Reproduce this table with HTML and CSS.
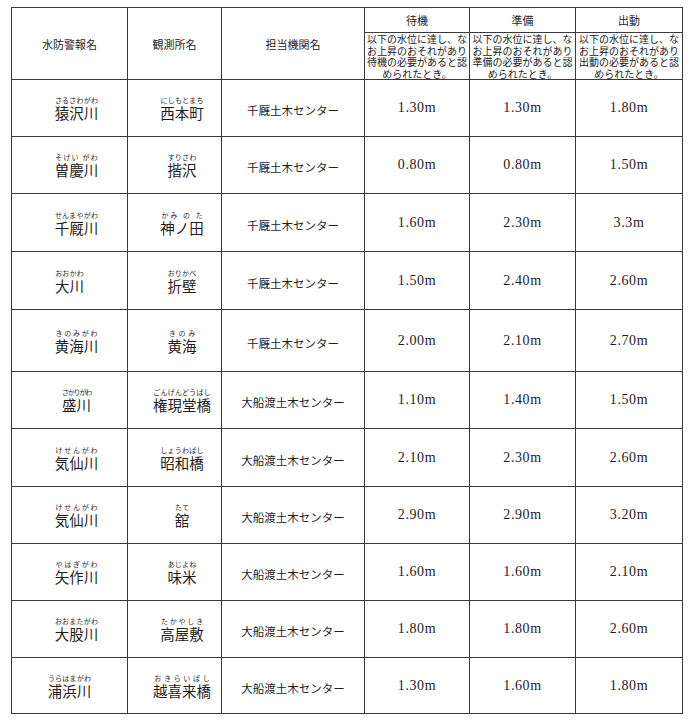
FILE: index.html
```html
<!DOCTYPE html>
<html lang="ja">
<head>
<meta charset="utf-8">
<title>水防警報</title>
<link rel="stylesheet" href="styles.css">
</head>
<body>
<table class="warn">
  <colgroup>
    <col class="c-river"><col class="c-station"><col class="c-office"><col class="c-lv"><col class="c-lv2"><col class="c-lv3">
  </colgroup>
  <thead>
    <tr class="h-top">
      <th rowspan="2">水防警報名</th>
      <th rowspan="2">観測所名</th>
      <th rowspan="2">担当機関名</th>
      <th>待機</th>
      <th>準備</th>
      <th>出動</th>
    </tr>
    <tr class="h-sub">
      <td class="cond">以下の水位に達し、な<br>お上昇のおそれがあり<br>待機の必要があると認<br>められたとき。</td>
      <td class="cond">以下の水位に達し、な<br>お上昇のおそれがあり<br>準備の必要があると認<br>められたとき。</td>
      <td class="cond">以下の水位に達し、な<br>お上昇のおそれがあり<br>出動の必要があると認<br>められたとき。</td>
    </tr>
  </thead>
  <tbody>
    <tr class="r57">
      <td class="river"><ruby>猿沢川<rt>さるさわがわ</rt></ruby></td>
      <td class="station"><ruby>西本町<rt>にしもとまち</rt></ruby></td>
      <td class="office">千厩土木センター</td>
      <td class="num">1.30m</td><td class="num">1.30m</td><td class="num">1.80m</td>
    </tr>
    <tr class="r57">
      <td class="river"><ruby>曽慶川<rt>そげい がわ</rt></ruby></td>
      <td class="station"><ruby>揩沢<rt>すりさわ</rt></ruby></td>
      <td class="office">千厩土木センター</td>
      <td class="num">0.80m</td><td class="num">0.80m</td><td class="num">1.50m</td>
    </tr>
    <tr class="r58">
      <td class="river"><ruby>千厩川<rt>せんまやがわ</rt></ruby></td>
      <td class="station"><ruby>神ノ田<rt>かみ の た</rt></ruby></td>
      <td class="office">千厩土木センター</td>
      <td class="num">1.60m</td><td class="num">2.30m</td><td class="num">3.3m</td>
    </tr>
    <tr class="r58">
      <td class="river shift"><ruby>大川<rt>おおかわ</rt></ruby></td>
      <td class="station"><ruby>折壁<rt>おりかべ</rt></ruby></td>
      <td class="office">千厩土木センター</td>
      <td class="num">1.50m</td><td class="num">2.40m</td><td class="num">2.60m</td>
    </tr>
    <tr class="r62">
      <td class="river"><ruby>黄海川<rt>きのみがわ</rt></ruby></td>
      <td class="station"><ruby>黄海<rt>きのみ</rt></ruby></td>
      <td class="office">千厩土木センター</td>
      <td class="num">2.00m</td><td class="num">2.10m</td><td class="num">2.70m</td>
    </tr>
    <tr class="r57">
      <td class="river"><ruby>盛川<rt class="tight">さかりがわ</rt></ruby></td>
      <td class="station"><ruby>権現堂橋<rt>ごんげんどうばし</rt></ruby></td>
      <td class="office">大船渡土木センター</td>
      <td class="num">1.10m</td><td class="num">1.40m</td><td class="num">1.50m</td>
    </tr>
    <tr class="r58">
      <td class="river"><ruby>気仙川<rt>けせんがわ</rt></ruby></td>
      <td class="station"><ruby>昭和橋<rt>しょうわばし</rt></ruby></td>
      <td class="office">大船渡土木センター</td>
      <td class="num">2.10m</td><td class="num">2.30m</td><td class="num">2.60m</td>
    </tr>
    <tr class="r57">
      <td class="river"><ruby>気仙川<rt>けせんがわ</rt></ruby></td>
      <td class="station"><ruby>舘<rt>たて</rt></ruby></td>
      <td class="office">大船渡土木センター</td>
      <td class="num">2.90m</td><td class="num">2.90m</td><td class="num">3.20m</td>
    </tr>
    <tr class="r57">
      <td class="river"><ruby>矢作川<rt>やはぎがわ</rt></ruby></td>
      <td class="station"><ruby>味米<rt>あじよね</rt></ruby></td>
      <td class="office">大船渡土木センター</td>
      <td class="num">1.60m</td><td class="num">1.60m</td><td class="num">2.10m</td>
    </tr>
    <tr class="r57">
      <td class="river"><ruby>大股川<rt>おおまたがわ</rt></ruby></td>
      <td class="station"><ruby>高屋敷<rt>たかやしき</rt></ruby></td>
      <td class="office">大船渡土木センター</td>
      <td class="num">1.80m</td><td class="num">1.80m</td><td class="num">2.60m</td>
    </tr>
    <tr class="r56">
      <td class="river shift"><ruby>浦浜川<rt>うらはまがわ</rt></ruby></td>
      <td class="station"><ruby>越喜来橋<rt>おきらいばし</rt></ruby></td>
      <td class="office">大船渡土木センター</td>
      <td class="num">1.30m</td><td class="num">1.60m</td><td class="num">1.80m</td>
    </tr>
  </tbody>
</table>
</body>
</html>
```
FILE: styles.css
```css
html, body {
  margin: 0;
  padding: 0;
  background: #ffffff;
}
body {
  padding: 7px 0 0 11px;
  font-family: "Noto Sans CJK JP", "Noto Sans", sans-serif;
  color: #1e1e1e;
}
.warn {
  border-collapse: collapse;
  table-layout: fixed;
  width: 672px;
}
.c-river { width: 116px; }
.c-station { width: 94px; }
.c-office { width: 143px; }
.c-lv { width: 105px; }
.c-lv2 { width: 106px; }
.c-lv3 { width: 107px; }

.warn th,
.warn td {
  border: 1px solid #3a3a3a;
  padding: 0;
  text-align: center;
  vertical-align: middle;
}
.warn th {
  font-weight: normal;
  font-size: 11px;
  line-height: 14px;
}
.h-top { height: 25px; }
.h-sub { height: 47px; }
.warn td.cond {
  font-size: 10px;
  line-height: 11.5px;
  white-space: nowrap;
  color: #222;
}
.r56 { height: 56px; }
.r57 { height: 57px; }
.r58 { height: 58px; }
.r62 { height: 62px; }

.warn td.river,
.warn td.station {
  font-size: 14.5px;
  line-height: 17px;
  padding-top: 2px;
}
.warn td.river { padding-left: 14px; }
.warn td.river.shift { padding-left: 0; }
.warn td.station { padding-left: 15px; }
rt {
  font-size: 7px;
  line-height: 7px;
  color: #2a2a2a;
  padding-bottom: 1px;
}
rt.tight {
  letter-spacing: -1.2px;
}
.warn td.office {
  font-size: 11.5px;
  line-height: 14px;
  padding-top: 4px;
}
.warn td.num {
  font-family: "Liberation Serif", "DejaVu Serif", serif;
  font-size: 14px;
  letter-spacing: 0.6px;
  line-height: 16px;
}
```
